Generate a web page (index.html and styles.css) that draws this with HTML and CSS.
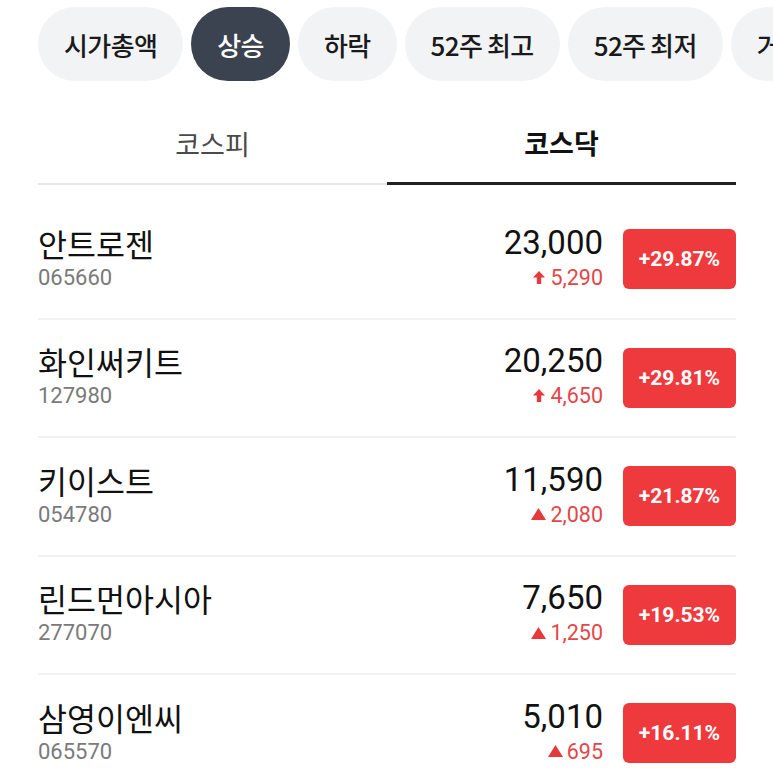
FILE: index.html
```html
<!DOCTYPE html>
<html lang="ko">
<head>
<meta charset="utf-8">
<link rel="stylesheet" href="styles.css">
</head>
<body>
<div class="page">
  <div class="chips">
    <span class="chip">시가총액</span>
    <span class="chip active">상승</span>
    <span class="chip">하락</span>
    <span class="chip">52주 최고</span>
    <span class="chip">52주 최저</span>
    <span class="chip">거래량</span>
  </div>
  <div class="tabs">
    <div class="tab">코스피</div>
    <div class="tab on">코스닥</div>
  </div>
  <div class="list">
    <div class="row">
      <div class="info"><div class="name">안트로젠</div><div class="code">065660</div></div>
      <div class="quote"><div class="price">23,000</div><div class="chg"><svg class="ico up" viewBox="0 0 12 13"><path d="M6 0 L12 6.5 H8.2 V13 H3.8 V6.5 H0 Z"/></svg>5,290</div></div>
      <div class="badge">+29.87%</div>
    </div>
    <div class="row">
      <div class="info"><div class="name">화인써키트</div><div class="code">127980</div></div>
      <div class="quote"><div class="price">20,250</div><div class="chg"><svg class="ico up" viewBox="0 0 12 13"><path d="M6 0 L12 6.5 H8.2 V13 H3.8 V6.5 H0 Z"/></svg>4,650</div></div>
      <div class="badge">+29.81%</div>
    </div>
    <div class="row">
      <div class="info"><div class="name">키이스트</div><div class="code">054780</div></div>
      <div class="quote"><div class="price">11,590</div><div class="chg"><svg class="ico tri" viewBox="0 0 14 11"><path d="M7 0 L14 11 H0 Z"/></svg>2,080</div></div>
      <div class="badge">+21.87%</div>
    </div>
    <div class="row">
      <div class="info"><div class="name">린드먼아시아</div><div class="code">277070</div></div>
      <div class="quote"><div class="price">7,650</div><div class="chg"><svg class="ico tri" viewBox="0 0 14 11"><path d="M7 0 L14 11 H0 Z"/></svg>1,250</div></div>
      <div class="badge">+19.53%</div>
    </div>
    <div class="row">
      <div class="info"><div class="name">삼영이엔씨</div><div class="code">065570</div></div>
      <div class="quote"><div class="price">5,010</div><div class="chg"><svg class="ico tri" viewBox="0 0 14 11"><path d="M7 0 L14 11 H0 Z"/></svg>695</div></div>
      <div class="badge">+16.11%</div>
    </div>
  </div>
</div>
</body>
</html>
```

FILE: styles.css
```css
html, body {
  margin: 0;
  padding: 0;
  background: #ffffff;
}
body {
  font-family: Roboto, "Noto Sans CJK KR", sans-serif;
  color: #111111;
  overflow: hidden;
}
.page {
  width: 773px;
  height: 782px;
  overflow: hidden;
}
.chips {
  display: flex;
  gap: 8px;
  padding: 7px 0 0 38px;
  white-space: nowrap;
  overflow: hidden;
}
.chip {
  flex: none;
  height: 74px;
  padding: 0 26px;
  border-radius: 37px;
  background: #f1f3f5;
  color: #1a1a1a;
  font-family: "Noto Sans CJK KR", sans-serif;
  font-size: 26px;
  font-weight: 500;
  letter-spacing: -0.6px;
  word-spacing: -2px;
  display: flex;
  align-items: center;
  box-sizing: border-box;
}
.chip.active {
  background: #3c4350;
  color: #ffffff;
}
.tabs {
  display: flex;
  margin: 20px 37px 0 38px;
}
.tab {
  flex: 1;
  height: 84px;
  box-sizing: border-box;
  border-bottom: 2px solid #e6e6e6;
  display: flex;
  align-items: center;
  justify-content: center;
  font-family: "Noto Sans CJK KR", sans-serif;
  font-size: 27px;
  color: #4a4a4a;
  padding-top: 2px;
}
.tab.on {
  border-bottom: 3px solid #222222;
  color: #111111;
  font-weight: 700;
}
.list {
  margin: 16px 37px 0 38px;
}
.row {
  display: flex;
  align-items: center;
  height: 118.5px;
  box-sizing: border-box;
  border-bottom: 2px solid #f2f2f2;
}
.info {
  flex: 1;
}
.name {
  font-family: "Noto Sans CJK KR", sans-serif;
  font-size: 31.5px;
  line-height: 36px;
  color: #111111;
}
.code {
  font-size: 22px;
  line-height: 33px;
  color: #7a7a7a;
}
.quote {
  display: flex;
  flex-direction: column;
  align-items: flex-end;
}
.price {
  font-size: 33px;
  font-weight: 400;
  line-height: 36px;
  color: #111111;
}
.chg {
  display: flex;
  align-items: center;
  font-size: 21.5px;
  line-height: 33px;
  color: #e2474a;
}
.ico {
  fill: #e5393c;
  margin-right: 5px;
}
.ico.up {
  width: 12px;
  height: 13px;
}
.ico.tri {
  width: 15px;
  height: 12px;
  margin-right: 4px;
}
.badge {
  flex: none;
  width: 113px;
  height: 60px;
  margin-left: 20px;
  border-radius: 6px;
  background: #ee3a3d;
  color: #ffffff;
  font-size: 21px;
  font-weight: 700;
  display: flex;
  align-items: center;
  justify-content: center;
}
```
